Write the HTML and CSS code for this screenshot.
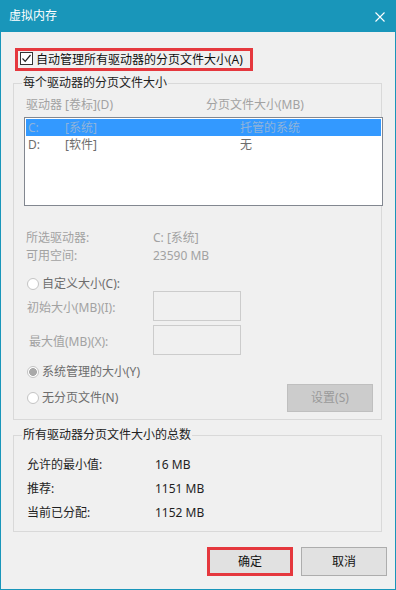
FILE: index.html
```html
<!DOCTYPE html>
<html lang="zh-CN">
<head>
  <meta charset="UTF-8">
  <title>虚拟内存</title>
  <link rel="stylesheet" href="styles.css">
</head>
<body>

<div class="window">
  <div class="titlebar">
    <span class="title">虚拟内存</span>
    <svg class="close" width="10" height="10" viewBox="0 0 10 10">
      <path d="M0.5 0.5 L9.5 9.5 M9.5 0.5 L0.5 9.5" stroke="#fff" stroke-width="1.1" fill="none"/>
    </svg>
  </div>

  <div class="body">
    <!-- Auto manage checkbox -->
    <label class="auto-manage">
      <span class="checkbox">
        <svg width="11" height="11" viewBox="0 0 11 11">
          <path d="M1.5 5.5 L4.2 8.3 L9.5 2" stroke="#222" stroke-width="1.2" fill="none"/>
        </svg>
      </span>
      <span>自动管理所有驱动器的分页文件大小(A)</span>
    </label>

    <!-- Per drive section -->
    <div class="group group-drives">
      <div class="group-title">每个驱动器的分页文件大小</div>
      <div class="list-header">
        <span>驱动器 [卷标](D)</span>
        <span>分页文件大小(MB)</span>
      </div>
      <div class="listbox">
        <div class="list-row selected"><span>C:</span><span>[系统]</span><span>托管的系统</span></div>
        <div class="list-row"><span>D:</span><span>[软件]</span><span>无</span></div>
      </div>

      <div class="info">
        <span>所选驱动器:</span><span>C: [系统]</span>
        <span>可用空间:</span><span>23590 MB</span>
      </div>

      <div class="radio-row radio-custom">
        <span class="radio"></span><span>自定义大小(C):</span>
      </div>
      <div class="field-row">
        <span class="field-label">初始大小(MB)(I):</span>
        <span class="input"></span>
      </div>
      <div class="field-row field-max">
        <span class="field-label">最大值(MB)(X):</span>
        <span class="input"></span>
      </div>
      <div class="radio-row radio-system">
        <span class="radio checked"></span><span>系统管理的大小(Y)</span>
      </div>
      <div class="radio-row radio-none">
        <span class="radio"></span><span>无分页文件(N)</span>
        <span class="btn btn-disabled">设置(S)</span>
      </div>
    </div>

    <!-- Totals section -->
    <div class="group group-total">
      <div class="group-title">所有驱动器分页文件大小的总数</div>
      <div class="totals">
        <span>允许的最小值:</span><span>16 MB</span>
        <span>推荐:</span><span>1151 MB</span>
        <span>当前已分配:</span><span>1152 MB</span>
      </div>
    </div>

    <div class="actions">
      <span class="btn btn-ok">确定</span>
      <span class="btn">取消</span>
    </div>
  </div>
</div>

</body>
</html>
```

FILE: styles.css
```css
:root {
  --accent: #1996ba;
  --face: #f0f0f0;
  --group-border: #d9d9d9;
  --disabled-text: #a2a2a2;
  --gray-text: #6d6d6d;
  --text: #1e1e1e;
  --highlight: red;
}

* {
  box-sizing: border-box;
}

body {
  margin: 0;
  font-family: "Noto Sans", "Noto Sans CJK SC", sans-serif;
  font-size: 12px;
  color: var(--text);
  background: #fff;
}

.window {
  width: 396px;
  height: 590px;
  display: flex;
  flex-direction: column;
  background: var(--face);
}

.titlebar {
  height: 32px;
  flex-shrink: 0;
  display: flex;
  align-items: center;
  justify-content: space-between;
  padding: 0 11px 0 9px;
  background: var(--accent);
  color: #fff;
  line-height: 16px;
}

.close {
  display: block;
  margin-top: 1px;
}

.body {
  flex: 1;
  border: 1px solid var(--accent);
  border-top: none;
  padding: 0 8px 0 12px;
}

/* checkbox with the red marker round it */
.auto-manage {
  display: flex;
  align-items: center;
  width: 238px;
  height: 23px;
  margin: 16px 0 0 2px;
  padding-left: 2px;
  border: 3px solid #e5383e;
  line-height: 16px;
  color: #111;
}

.checkbox {
  width: 13px;
  height: 13px;
  margin: -3px 3px 0 0;
  border: 1px solid #333;
  background: #fff;
  display: flex;
  align-items: center;
  justify-content: center;
}

.checkbox svg {
  display: block;
}

.group {
  width: 369px;
  border: 1px solid var(--group-border);
}

.group-title {
  width: fit-content;
  margin: -9px 0 0 8px;
  padding: 0 1px;
  line-height: 16px;
  background: var(--face);
  color: #222;
}

.group-drives {
  margin-top: 12px;
  padding-bottom: 7px;
}

.list-header {
  display: grid;
  grid-template-columns: 180px 1fr;
  margin-top: 6px;
  padding-left: 12px;
  line-height: 16px;
  color: var(--disabled-text);
}

.listbox {
  width: 359px;
  height: 89px;
  margin: 4px 0 0 10px;
  padding: 1px;
  border: 1px solid #828790;
  background: #fff;
}

.list-row {
  display: grid;
  grid-template-columns: 37px 175px 1fr;
  height: 17px;
  padding-left: 2px;
  line-height: 17px;
  color: var(--gray-text);
}

.list-row.selected {
  background: #3399ff;
  color: #8fb3da;
}

.info {
  display: grid;
  grid-template-columns: 127px 1fr;
  margin-top: 23px;
  padding-left: 12px;
  line-height: 18px;
  color: var(--disabled-text);
}

.radio-row {
  display: flex;
  align-items: center;
  height: 14px;
  padding-left: 13px;
  line-height: 16px;
  color: var(--gray-text);
}

.radio-custom {
  margin-top: 12px;
}

.radio-system {
  margin-top: 10px;
}

.radio-none {
  height: 28px;
  margin-top: 5px;
  padding-right: 8px;
}

.radio {
  width: 12px;
  height: 12px;
  margin-right: 3px;
  border: 1px solid #c4c4c4;
  border-radius: 50%;
  background: #fff;
  flex-shrink: 0;
}

.radio.checked {
  background: radial-gradient(circle, #a9a9a9 0 3.6px, #fff 4.2px);
}

.field-row {
  display: flex;
  align-items: center;
  height: 30px;
  padding-left: 13px;
  line-height: 16px;
  color: var(--disabled-text);
}

.field-max {
  margin-top: 4px;
}

.field-label {
  width: 126px;
  padding-top: 3px;
}

.field-max .field-label {
  padding-left: 2px;
}

.input {
  width: 88px;
  height: 30px;
  border: 1px solid #cccccc;
  background: var(--face);
}

.btn {
  display: flex;
  align-items: center;
  justify-content: center;
  width: 86px;
  height: 29px;
  border: 1px solid #adadad;
  background: #e1e1e1;
  color: #111;
  line-height: 16px;
}

.btn-disabled {
  height: 28px;
  margin-left: auto;
  border-color: #bfbfbf;
  background: #cccccc;
  color: #9a9a9a;
}

.btn-ok {
  border: 3px solid #e5383e;
}

.group-total {
  margin-top: 15px;
  padding-bottom: 6px;
}

.totals {
  display: grid;
  grid-template-columns: 128px 1fr;
  margin-top: 10px;
  padding-left: 13px;
  line-height: 24px;
  color: #1f1f1f;
}

.actions {
  display: flex;
  justify-content: flex-end;
  gap: 8px;
  margin-top: 15px;
}
```
